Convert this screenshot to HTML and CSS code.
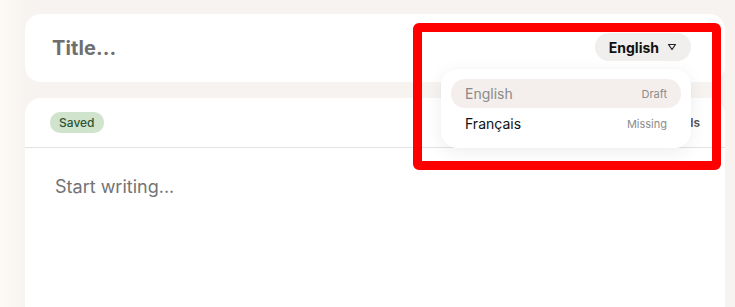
FILE: index.html
```html
<!DOCTYPE html>
<html>
<head>
<meta charset="utf-8">
<link rel="stylesheet" href="styles.css">
</head>
<body>
<div class="page">
  <div class="title-card">
    <div class="title">Title...</div>
    <div class="lang">
      <button class="lang-btn">English
        <svg class="caret" width="10" height="8" viewBox="0 0 10 8"><path d="M1.5 1.5h7L5 6.5z" fill="none" stroke="#222" stroke-width="1.2" stroke-linejoin="round"/></svg>
      </button>
      <div class="menu">
        <div class="item active"><span class="name">English</span><span class="status">Draft</span></div>
        <div class="item"><span class="name">Français</span><span class="status">Missing</span></div>
      </div>
      <div class="highlight"></div>
    </div>
  </div>
  <div class="editor-card">
    <div class="toolbar">
      <span class="badge">Saved</span>
      <span class="count">0 words</span>
    </div>
    <div class="body">Start writing...</div>
  </div>
</div>
</body>
</html>
```

FILE: styles.css
```css
* { box-sizing: border-box; }
html, body { margin: 0; padding: 0; }
body {
  width: 735px;
  height: 307px;
  overflow: hidden;
  font-family: "Inter", "Liberation Sans", sans-serif;
  background: linear-gradient(90deg, #fdf9f5 0px, #f7f3f0 28px, #f7f3f0 100%);
}
.page {
  padding: 14px 10px 0 25px;
  display: flex;
  flex-direction: column;
  gap: 16px;
  height: 307px;
}
.title-card {
  background: #fff;
  border-radius: 16px;
  height: 68px;
  display: flex;
  align-items: center;
  justify-content: space-between;
  padding: 0 34px 0 27px;
  position: relative;
  z-index: 2;
}
.title {
  font-size: 20px;
  font-weight: 700;
  color: #6e6e6e;
  letter-spacing: 0.1px;
}
.lang { position: relative; }
.lang-btn {
  font-family: inherit;
  border: none;
  background: #f1efee;
  border-radius: 14px;
  height: 28px;
  padding: 0 14px;
  display: flex;
  align-items: center;
  gap: 8px;
  font-size: 14px;
  font-weight: 700;
  color: #111;
  margin-top: -2px;
}
.caret { margin-top: -1px; }
.menu {
  position: absolute;
  top: 34px;
  right: 0;
  width: 250px;
  background: #fff;
  border-radius: 16px;
  padding: 10px;
  box-shadow: 0 4px 18px rgba(0,0,0,0.07), 0 0 2px rgba(0,0,0,0.03);
  display: flex;
  flex-direction: column;
  gap: 1px;
}
.item {
  display: flex;
  justify-content: space-between;
  align-items: center;
  height: 29px;
  padding: 0 14px;
  border-radius: 14px;
  font-size: 14px;
  color: #111;
}
.item.active { background: #f4efec; }
.item.active .name { color: #8a8a8a; }
.status { font-size: 11px; color: #8c8c8c; }
.highlight {
  position: absolute;
  left: -182px;
  top: -12px;
  width: 308px;
  height: 147px;
  border: 9px solid #ff0000;
  border-radius: 6px;
  pointer-events: none;
}
.editor-card {
  background: #fff;
  border-radius: 16px 16px 0 0;
  flex: 1;
  display: flex;
  flex-direction: column;
  position: relative;
  z-index: 1;
}
.toolbar {
  height: 50px;
  border-bottom: 1px solid #e2e2e2;
  display: flex;
  align-items: center;
  justify-content: space-between;
  padding: 0 25px 1px 25px;
}
.badge {
  background: #cfe3cd;
  color: #2e5433;
  font-size: 12px;
  font-weight: 500;
  border-radius: 10px;
  padding: 3px 9px;
}
.count {
  font-size: 12px;
  font-weight: 600;
  color: #555;
}
.body {
  padding: 28px 30px;
  font-size: 18px;
  color: #737373;
}
```
